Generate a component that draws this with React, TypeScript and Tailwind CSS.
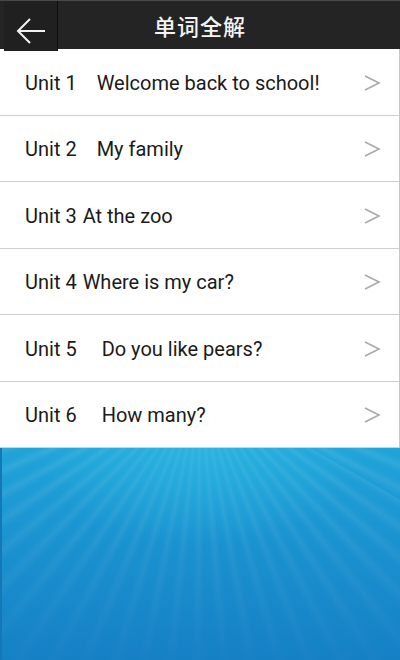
import React from "react";

const units = [
  { no: "Unit 1", title: "Welcome back to school!", gap: "ml-[20px]" },
  { no: "Unit 2", title: "My family", gap: "ml-[20px]" },
  { no: "Unit 3", title: "At the zoo", gap: "ml-[6px]" },
  { no: "Unit 4", title: "Where is my car?", gap: "ml-[6px]" },
  { no: "Unit 5", title: "Do you like pears?", gap: "ml-[25px]" },
  { no: "Unit 6", title: "How many?", gap: "ml-[25px]" },
];

function Chevron() {
  return (
    <svg width="18" height="18" viewBox="0 0 18 18" className="shrink-0">
      <polyline points="2,2 16,9 2,16" fill="none" stroke="#a9a9a9" strokeWidth="1.6" />
    </svg>
  );
}

export default function App() {
  return (
    <div className="flex h-[660px] w-[400px] flex-col overflow-hidden bg-white font-['Roboto','Noto_Sans_CJK_SC',sans-serif]">
      {/* Title bar */}
      <header className="relative flex h-[49px] shrink-0 items-center justify-center border-t border-[#4a4a4a] bg-[#242424]">
        <button
          type="button"
          className="absolute left-[4px] top-0 flex h-[50px] w-[54px] items-end justify-center border-r border-[#0e0e0e] bg-[#202020] pb-[6px]"
        >
          <svg width="30" height="28" viewBox="0 0 30 28">
            <path d="M29 14H2M14 2 2 14l12 12" fill="none" stroke="#f2f2f2" strokeWidth="2" />
          </svg>
        </button>
        <h1 className="text-[22px] font-medium tracking-[1px] text-[#f4f4f4] font-['Noto_Sans_CJK_SC',sans-serif]">
          单词全解
        </h1>
      </header>

      {/* Unit list */}
      <ul className="shrink-0 border-r border-[#c8c8c8]">
        {units.map((u) => (
          <li
            key={u.no}
            className="flex h-[66.5px] items-center justify-between border-b border-[#cfcfcf] pl-[25px] pr-[18px] pt-[2px] text-[20px] text-[#1a1a1a]"
          >
            <span className="whitespace-nowrap">
              {u.no}
              <span className={u.gap}>{u.title}</span>
            </span>
            <Chevron />
          </li>
        ))}
      </ul>

      {/* Blue rays background */}
      <div className="relative flex-1 overflow-hidden bg-linear-to-b from-[#20a4d9] via-[#1a90cf] to-[#1680c5]">
        <div className="absolute inset-0 bg-[repeating-conic-gradient(from_120deg_at_50%_-30%,rgba(255,255,255,0.09)_0deg,rgba(255,255,255,0)_2deg,rgba(255,255,255,0)_3.5deg,rgba(255,255,255,0.09)_5.5deg)] [mask-image:linear-gradient(to_bottom,black,rgba(0,0,0,0.15))]" />
        <div className="absolute inset-0 bg-[radial-gradient(ellipse_55%_60%_at_50%_0%,rgba(55,195,232,0.5),rgba(55,195,232,0)_75%)]" />
        <div className="absolute inset-y-0 left-0 w-[2px] bg-[#1478b8]" />
      </div>
    </div>
  );
}
